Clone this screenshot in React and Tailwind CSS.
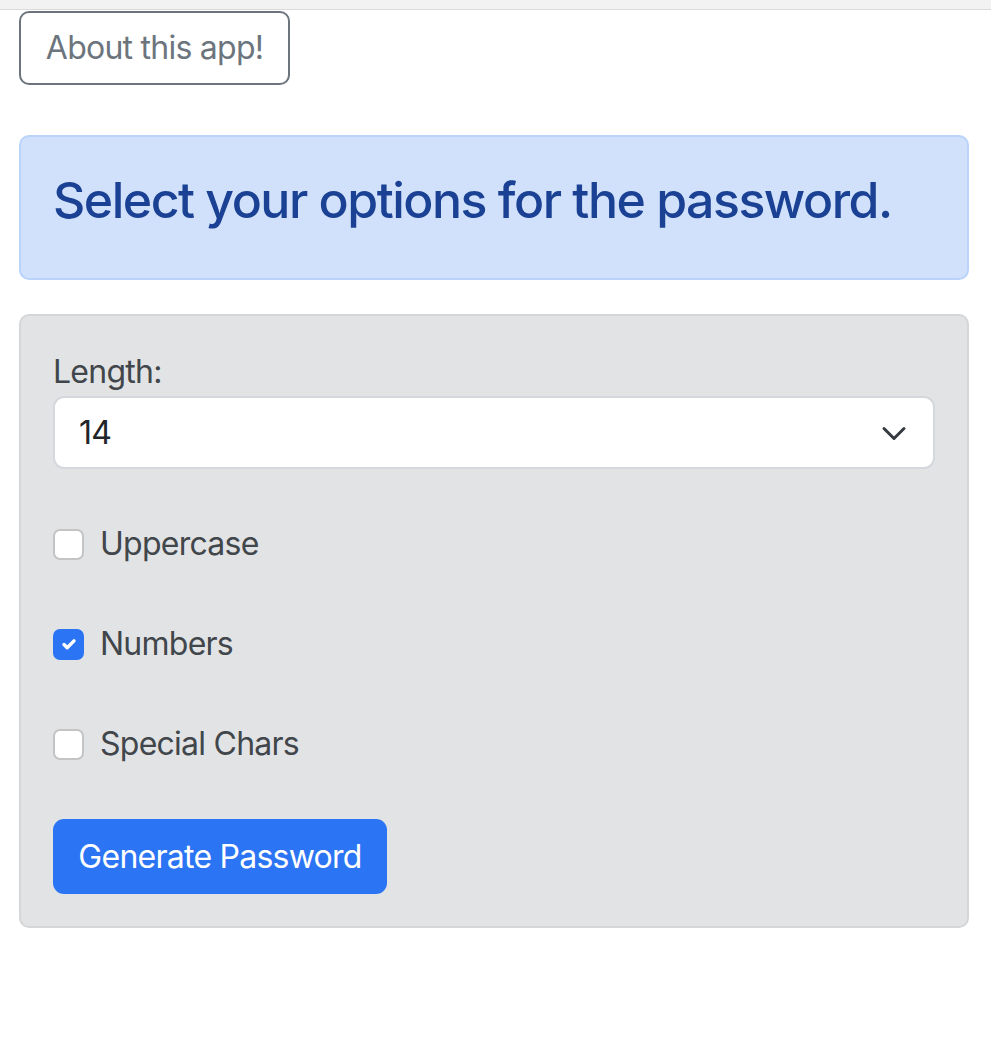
import { useState } from "react";

const font = { fontFamily: "Inter, 'Liberation Sans', sans-serif" };

function Check({ label, checked, onChange }) {
  return (
    <label className="flex items-center h-[48px] text-[32px] leading-[48px] tracking-[-0.75px] text-[#41464b] cursor-pointer">
      <span
        className={`w-[31px] h-[31px] rounded-[7px] border-2 flex items-center justify-center ${
          checked ? "bg-[#2b74f4] border-[#2b74f4]" : "bg-white border-[#c4c4c4]"
        }`}
      >
        {checked && (
          <svg width="20" height="20" viewBox="0 0 20 20" fill="none">
            <path d="M5 10.5l3.2 3.2 6.8-6.8" stroke="white" strokeWidth="3.4" strokeLinecap="round" strokeLinejoin="round" />
          </svg>
        )}
      </span>
      <input type="checkbox" className="hidden" checked={checked} onChange={onChange} />
      <span className="ml-[16px]">{label}</span>
    </label>
  );
}

export default function App() {
  const [opts, setOpts] = useState({ upper: false, numbers: true, special: false });
  const toggle = (k) => setOpts((o) => ({ ...o, [k]: !o[k] }));

  return (
    <div className="min-h-screen bg-white" style={font}>
      <div className="h-[10px] bg-[#f2f2f2] border-b border-[#dadada]" />

      <div className="pl-[19px] pr-[22px]">
        <button className="mt-[1px] h-[74px] w-[271px] rounded-[10px] border-2 border-[#6c757d] text-[#6c757d] text-[32px] leading-[48px] tracking-[-0.75px]">
          About this app!
        </button>

        <div className="mt-[50px] rounded-[10px] border-2 border-[#b9d3fb] bg-[#d1e1fb] px-[32px] pt-[30px] pb-[44px]">
          <h3 className="text-[#1a4193] text-[50px] leading-[67px] font-medium tracking-[-1.5px] whitespace-nowrap">
            Select your options for the password.
          </h3>
        </div>

        <div className="mt-[34px] rounded-[10px] border-2 border-[#d4d6d8] bg-[#e2e3e5] p-[32px]">
          <div className="text-[32px] leading-[48px] tracking-[-0.75px] text-[#41464b]">Length:</div>
          <div className="relative">
            <select
              defaultValue="14"
              className="appearance-none w-full h-[73px] rounded-[11px] border-2 border-[#d4d8dc] bg-white pl-[24px] text-[32px] tracking-[-0.75px] text-[#212529] outline-none"
            >
              {[8, 10, 12, 14, 16, 20].map((n) => (
                <option key={n} value={n}>{n}</option>
              ))}
            </select>
            <svg className="absolute right-[25px] top-[21px] pointer-events-none" width="32" height="32" viewBox="0 0 16 16" fill="none">
              <path d="M3 5.75l5 5 5-5" stroke="#343a40" strokeWidth="1.5" strokeLinecap="round" strokeLinejoin="round" />
            </svg>
          </div>

          <div className="mt-[51px] flex flex-col gap-[52px]">
            <Check label="Uppercase" checked={opts.upper} onChange={() => toggle("upper")} />
            <Check label="Numbers" checked={opts.numbers} onChange={() => toggle("numbers")} />
            <Check label="Special Chars" checked={opts.special} onChange={() => toggle("special")} />
          </div>

          <button className="mt-[51px] h-[75px] w-[334px] rounded-[11px] bg-[#2b74f4] text-white text-[32px] leading-[48px] tracking-[-0.75px]">
            Generate Password
          </button>
        </div>
      </div>
    </div>
  );
}
